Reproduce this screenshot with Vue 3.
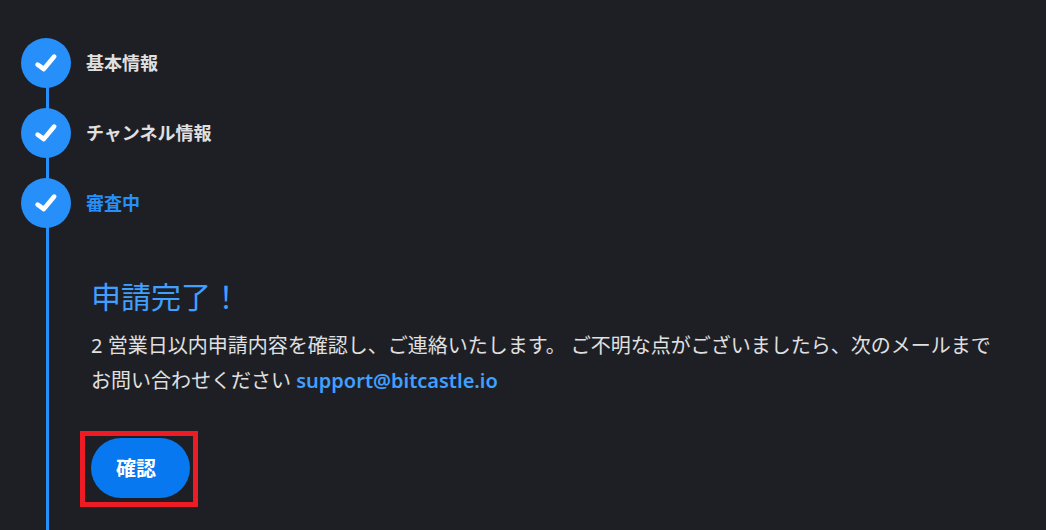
<script setup>
const steps = [
  { label: '基本情報', current: false },
  { label: 'チャンネル情報', current: false },
  { label: '審査中', current: true },
]
</script>

<template>
  <main class="page">
    <ol class="steps">
      <li v-for="step in steps" :key="step.label" class="step" :class="{ current: step.current }">
        <span class="marker">
          <svg viewBox="0 0 24 24" width="24" height="24" aria-hidden="true">
            <path d="M3.6 13.6 L9.8 18 L20.2 5.6" />
          </svg>
        </span>
        <span class="label">{{ step.label }}</span>
      </li>
    </ol>
    <section class="content">
      <h1>申請完了！</h1>
      <p>
        2 営業日以内申請内容を確認し、ご連絡いたします。 ご不明な点がございましたら、次のメールまでお問い合わせください
        <a href="mailto:support@bitcastle.io">support@bitcastle.io</a>
      </p>
      <div class="highlight"><button type="button">確認</button></div>
    </section>
  </main>
</template>

<style>
body {
  margin: 0;
  background: #1e1f25;
}
</style>

<style scoped>
.page {
  position: relative;
  box-sizing: border-box;
  min-height: 100vh;
  padding: 38px 48px 23px 21px;
  background: #1e1f25;
  color: #e0e0e0;
  font-family: "Noto Sans", "Noto Sans CJK JP", sans-serif;
}
.page::before {
  content: "";
  position: absolute;
  top: 60px;
  bottom: 0;
  left: 46px;
  width: 3px;
  background: #268ffa;
}
.steps {
  position: relative;
  display: flex;
  flex-direction: column;
  gap: 20px;
  margin: 0;
  padding: 0;
  list-style: none;
}
.step {
  display: flex;
  align-items: center;
  gap: 15px;
  font-size: 18px;
  line-height: 24px;
  font-weight: 700;
}
.marker {
  display: flex;
  align-items: center;
  justify-content: center;
  width: 50px;
  height: 50px;
  border-radius: 50%;
  background: #268ffa;
}
.marker path {
  fill: none;
  stroke: #fff;
  stroke-width: 4.6;
  stroke-linecap: round;
  stroke-linejoin: round;
}
.current .label {
  color: #268ffa;
}
.content {
  padding: 47px 0 0 70px;
}
h1 {
  margin: 0 0 9px;
  color: #409fff;
  font-size: 30px;
  line-height: 44px;
  font-weight: 400;
}
p {
  margin: 0;
  font-size: 20px;
  line-height: 35px;
}
a {
  color: #409fff;
  font-weight: 600;
  text-decoration: none;
}
.highlight {
  width: max-content;
  margin: 33px 0 0 -11px;
  padding: 2px 3px 4px 6px;
  border: 5px solid #ed1c24;
}
button {
  display: block;
  height: 60px;
  padding: 0 34px 2px 25px;
  border: 0;
  border-radius: 30px;
  background: #0778ef;
  color: #fff;
  font: inherit;
  font-size: 20px;
  font-weight: 700;
}
</style>
